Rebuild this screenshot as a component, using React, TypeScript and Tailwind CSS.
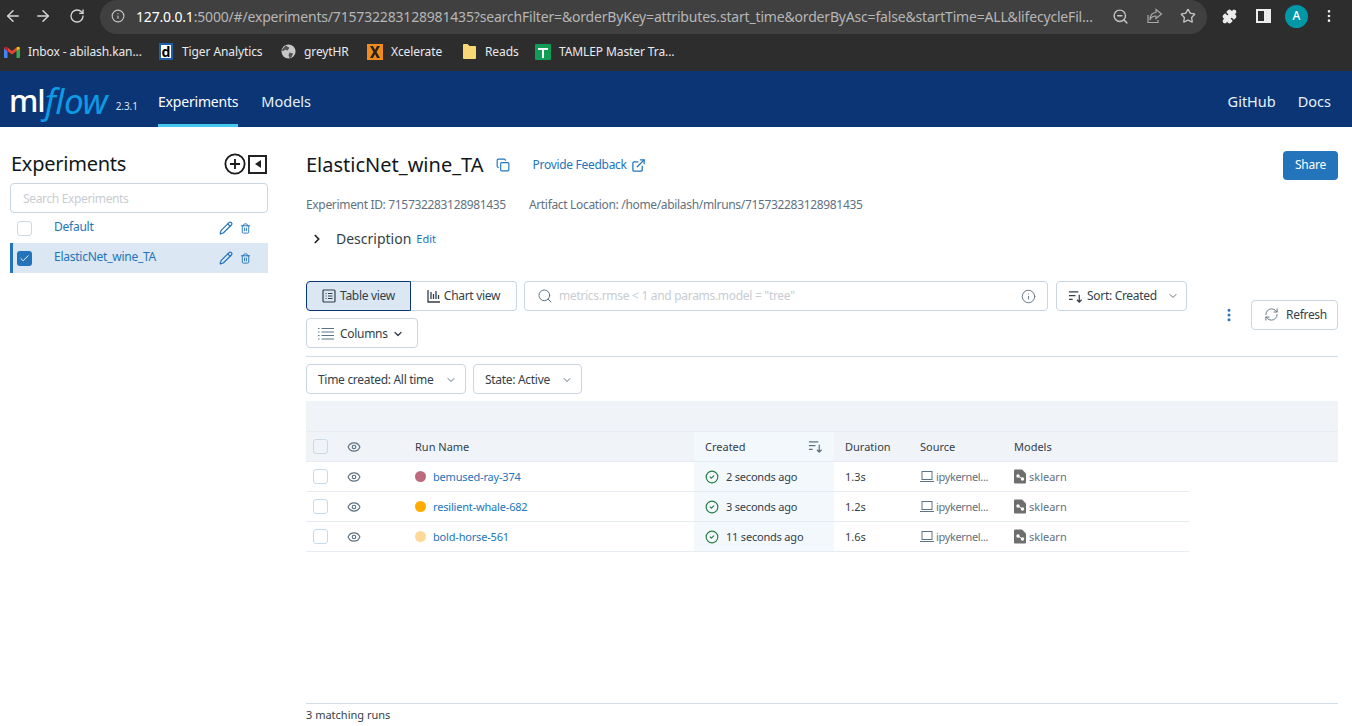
import React from "react";
import {
  ArrowLeft, ArrowRight, RotateCw, Info, ZoomOut, Star, Puzzle, EllipsisVertical,
  Pencil, Trash2, Check, Copy, ExternalLink, ChevronRight, ChevronDown, Search, RefreshCw,
  Eye, CircleCheck,
} from "lucide-react";

const SortIcon = ({ className = "" }: { className?: string }) => (
  <svg viewBox="0 0 16 16" className={className} fill="none" stroke="currentColor" strokeWidth="1.3">
    <path d="M1 3h10M1 7h7M1 11h4M12 6v8M9.500 11.500 12 14l2.500-2.500" />
  </svg>
);

const GmailIcon = () => (
  <svg viewBox="0 0 16 12" className="w-[16px] h-[12px]">
    <path d="M0 2v9a1 1 0 0 0 1 1h2.500V5z" fill="#4285f4" />
    <path d="M16 2v9a1 1 0 0 1-1 1h-2.500V5z" fill="#34a853" />
    <path d="M3.500 5 8 8.400 12.500 5V1.500L8 5 3.500 1.500z" fill="#ea4335" />
    <path d="M0 2.500C0 .8 2 0 3.500 1.500V5L0 2.500z" fill="#c5221f" />
    <path d="M16 2.500C16 .8 14 0 12.500 1.500V5L16 2.500z" fill="#fbbc04" />
  </svg>
);

const TigerIcon = () => (
  <div className="w-[14px] h-[17px] bg-white border-2 border-[#1e5fa8] flex items-center justify-center text-[14px] leading-none font-bold text-black">d</div>
);

const GlobeIcon = () => (
  <svg viewBox="0 0 16 16" className="w-[15px] h-[15px]">
    <circle cx="8" cy="8" r="7.500" fill="#c8c8c8" />
    <path d="M5 1.500 9 4 7 7 4 6 2 8 1 6zM9 9l4 1-2 4.500-2 .5-1-3z" fill="#555" />
  </svg>
);

const XcelerateIcon = () => (
  <svg viewBox="0 0 16 16" className="w-[16px] h-[16px]">
    <rect width="16" height="16" fill="#ef8a1d" />
    <path d="M3 2h3l2 4 2-4h3L9.500 8 13 14h-3L8 10l-2 4H3l3.500-6z" fill="#26221f" />
  </svg>
);

const FolderIcon = () => (
  <svg viewBox="0 0 14 16" className="w-[13px] h-[15px]">
    <path d="M0 1a1 1 0 0 1 1-1h4l2 2h6a1 1 0 0 1 1 1v12a1 1 0 0 1-1 1H1a1 1 0 0 1-1-1z" fill="#f8d775" />
  </svg>
);

const SheetIcon = () => (
  <svg viewBox="0 0 16 16" className="w-[16px] h-[16px]">
    <rect width="16" height="16" rx="1" fill="#0f9d58" />
    <path d="M3 4h10v2H9v8H7V6H3z" fill="#fff" />
  </svg>
);

const ShareOutIcon = () => (
  <svg viewBox="0 0 16 16" className="w-[17px] h-[16px] ml-[17px] text-[#a8a8a8] shrink-0" fill="none" stroke="currentColor" strokeWidth="1.200">
    <path d="M1.500 7v7.500h10V12" />
    <path d="M9.500 1.500 15 6l-5.500 4.500V8C7 8 4.500 9 3.500 12c0-5 2.500-7.500 6-7.500z" />
  </svg>
);

const TableViewIcon = () => (
  <svg viewBox="0 0 14 14" className="w-[14px] h-[14px]" fill="none" stroke="currentColor" strokeWidth="1.200">
    <rect x="1" y="1" width="12" height="12" rx="1" />
    <path d="M3.500 4.500h1M6 4.500h4.500M3.500 7h1M6 7h4.500M3.500 9.500h1M6 9.500h4.500" />
  </svg>
);

const ColumnsIcon = () => (
  <svg viewBox="0 0 16 12" className="w-[16px] h-[12px] text-[#5f7281]" fill="none" stroke="currentColor" strokeWidth="1">
    <path d="M0 .5h1.500M3.500 .5H16M0 4h1.500M3.500 4H16M0 7.500h1.500M3.500 7.500H16M0 11h1.500M3.500 11H16" />
  </svg>
);

const LaptopIcon = () => (
  <svg viewBox="0 0 14 13" className="w-[14px] h-[13px] shrink-0 text-[#5f7281]" fill="none" stroke="currentColor" strokeWidth="1">
    <rect x="2" y="1.500" width="10" height="8" />
    <path d="M0 11.500h14" />
  </svg>
);

const SklearnIcon = () => (
  <svg viewBox="0 0 12 14" className="w-[12px] h-[15px] shrink-0">
    <path d="M0 1a1 1 0 0 1 1-1h7l4 4v9a1 1 0 0 1-1 1H1a1 1 0 0 1-1-1z" fill="#6e6e6e" />
    <circle cx="4" cy="6.500" r="1.700" fill="#fff" />
    <circle cx="8.500" cy="9.500" r="1.700" fill="#fff" />
    <path d="M4 6.500 8.500 9.500" stroke="#fff" strokeWidth="1" />
  </svg>
);

const Bookmark = ({ icon, label, width }: { icon: React.ReactNode; label: string; width: string }) => (
  <div className={`flex items-center gap-[8px] ${width}`}>
    <span className="w-[16px] flex justify-center shrink-0">{icon}</span>
    <span className="text-[12px] tracking-[-0.1px] text-[#e8eaed] whitespace-nowrap">{label}</span>
  </div>
);

const Btn = ({ className = "", children }: { className?: string; children: React.ReactNode }) => (
  <div className={`h-[30px] flex items-center border border-[#c9d6e2] rounded-[4px] text-[12px] tracking-[-0.3px] text-[#333f4a] ${className}`}>
    {children}
  </div>
);

const runs = [
  { name: "bemused-ray-374", color: "#bd6a7d", time: "2 seconds ago", dur: "1.3s" },
  { name: "resilient-whale-682", color: "#ffab00", time: "3 seconds ago", dur: "1.2s" },
  { name: "bold-horse-561", color: "#ffd998", time: "11 seconds ago", dur: "1.6s" },
];

const Box = () => <div className="w-[15px] h-[15px] border border-[#c9d9e6] rounded-[3px] bg-white" />;

export default function App() {
  return (
    <div className="w-[1352px] h-[726px] overflow-hidden bg-white flex flex-col font-['Noto_Sans',sans-serif]">
      {/* browser */}
      <div className="h-[36px] bg-[#2d2d2d] flex items-start shrink-0">
        <div className="h-[32px] flex items-center pl-[4px] w-[100px] text-[#d5d5d5]">
          <ArrowLeft className="w-[18px] h-[18px]" />
          <ArrowRight className="w-[18px] h-[18px] ml-[12px]" />
          <RotateCw className="w-[16px] h-[16px] ml-[17px]" />
        </div>
        <div className="w-[1107px] h-[34px] bg-[#404040] rounded-full flex items-center pl-[11px] pr-[11px] pb-[2px]">
          <Info className="w-[14px] h-[14px] text-[#c4c4c4] shrink-0" />
          <div className="ml-[11px] text-[14px] tracking-[-0.18px] whitespace-nowrap flex-1 min-w-0 text-[#b6b6b6]">
            <span className="text-white">127.0.0.1</span>:5000/#/experiments/715732283128981435?searchFilter=&amp;orderByKey=attributes.start_time&amp;orderByAsc=false&amp;startTime=ALL&amp;lifecycleFil...
          </div>
          <ZoomOut className="w-[17px] h-[17px] text-[#c4c4c4] shrink-0" />
          <ShareOutIcon />
          <Star className="w-[16px] h-[16px] ml-[17px] text-[#c4c4c4] shrink-0" strokeWidth={2} />
        </div>
        <div className="flex items-center h-[32px] pl-[15px] text-[#ececec]">
          <Puzzle className="w-[15px] h-[15px] fill-current" />
          <div className="w-[15px] h-[14px] ml-[19px] border-2 border-[#ececec] flex justify-end"><div className="w-[5px] bg-[#ececec]" /></div>
          <div className="w-[23px] h-[23px] ml-[14px] rounded-full bg-[#0097a7] text-white text-[12px] font-medium flex items-center justify-center">A</div>
          <EllipsisVertical className="w-[16px] h-[16px] ml-[13px]" />
        </div>
      </div>
      <div className="h-[35px] bg-[#2d2d2d] flex items-center pl-[4px] pb-[4px] shrink-0">
        <Bookmark icon={<GmailIcon />} label="Inbox - abilash.kan..." width="w-[154px]" />
        <Bookmark icon={<TigerIcon />} label="Tiger Analytics" width="w-[122px]" />
        <Bookmark icon={<GlobeIcon />} label="greytHR" width="w-[87px]" />
        <Bookmark icon={<XcelerateIcon />} label="Xcelerate" width="w-[94px]" />
        <Bookmark icon={<FolderIcon />} label="Reads" width="w-[74px]" />
        <Bookmark icon={<SheetIcon />} label="TAMLEP Master Tra..." width="w-[160px]" />
      </div>
      {/* nav */}
      <div className="h-[56px] bg-[#0b3574] flex items-stretch shrink-0 text-[#e7f1fb] text-[14px] tracking-[-0.2px]">
        <div className="w-[158px] flex items-center pl-[9px] tracking-normal pt-[3px]">
          <span className="text-white text-[31px] leading-none font-medium -tracking-[1px]">ml</span>
          <span className="text-[#0d9ae6] text-[35px] leading-none italic -tracking-[0.5px] w-[66px] whitespace-nowrap">flow</span>
          <span className="text-[#dce8f2] text-[10px] ml-[5px] mt-[12px] tracking-[-0.1px]">2.3.1</span>
        </div>
        <div className="flex items-center border-b-[3px] border-[#43c9ed] pt-[8px] text-white">Experiments</div>
        <div className="flex items-center pl-[23px] pt-[8px] pb-[3px] text-[14.5px] tracking-normal">Models</div>
        <div className="flex items-center ml-auto pr-[21px] gap-[22px] pt-[8px] pb-[3px] text-[14.5px] tracking-normal">
          <span>GitHub</span>
          <span>Docs</span>
        </div>
      </div>
      {/* main */}
      <div className="flex-1 min-h-0 flex">
        <div className="w-[306px] shrink-0 pl-[10px] pr-[38px]">
          <div className="flex items-center h-[56px] pt-[18px]">
            <span className="text-[20px] tracking-[-0.25px] text-[#11171c] flex-1 pl-[1px]">Experiments</span>
            <svg viewBox="0 0 24 24" className="w-[22px] h-[22px] text-[#1a1a1a]" fill="none" stroke="currentColor" strokeWidth="2">
              <circle cx="12" cy="12" r="10.500" />
              <path d="M12 6.500v11M6.500 12h11" />
            </svg>
            <div className="w-[19px] h-[19px] ml-[2px] mr-[1px] border-2 border-[#222] flex items-center justify-center">
              <div className="w-0 h-0 border-y-[4px] border-y-transparent border-r-[6px] border-r-[#222]" />
            </div>
          </div>
          <div className="h-[30px] border border-[#c9d6e2] rounded-[4px] flex items-center pl-[12px] pt-[1px] text-[12px] tracking-[-0.35px] text-[#c8cdd2]">Search Experiments</div>
          <div className="h-[30px] flex items-center text-[12px] tracking-[-0.25px] text-[#2374bb] pl-[7px] pr-[17px]">
            <Box />
            <span className="ml-[22px] flex-1 pb-[2px]">Default</span>
            <Pencil className="w-[14px] h-[14px]" />
            <Trash2 className="w-[11px] h-[11px] ml-[7px]" />
          </div>
          <div className="h-[30px] flex items-center text-[12px] tracking-[-0.25px] text-[#2374bb] pl-[4px] pr-[17px] bg-[#dbe7f3] border-l-[3px] border-[#2374bb]">
            <div className="w-[15px] h-[15px] rounded-[3px] bg-[#2374bb] flex items-center justify-center">
              <Check className="w-[11px] h-[11px] text-white" />
            </div>
            <span className="ml-[22px] flex-1 pb-[2px]">ElasticNet_wine_TA</span>
            <Pencil className="w-[14px] h-[14px]" />
            <Trash2 className="w-[11px] h-[11px] ml-[7px]" />
          </div>
        </div>
        <div className="flex-1 min-w-0 mr-[14px] flex flex-col">
          <div className="flex items-center h-[54px] pt-[22px]">
            <span className="text-[20px] text-[#11171c]">ElasticNet_wine_TA</span>
            <Copy className="w-[14px] h-[14px] ml-[12px] text-[#2374bb]" />
            <span className="ml-[23px] text-[12px] tracking-[-0.3px] text-[#2374bb]">Provide Feedback</span>
            <ExternalLink className="w-[15px] h-[15px] ml-[4px] text-[#2374bb]" />
            <div className="ml-auto h-[29px] w-[55px] bg-[#2374bb] rounded-[4px] text-white text-[12px] tracking-[-0.2px] flex items-center justify-center">Share</div>
          </div>
          <div className="flex items-center mt-[15px] h-[18px] text-[12px] tracking-[-0.33px] text-[#5f7281]">
            <span>Experiment ID: 715732283128981435</span>
            <span className="ml-[23px]">Artifact Location: /home/abilash/mlruns/715732283128981435</span>
          </div>
          <div className="flex items-center mt-[16px] h-[18px] pl-[4px]">
            <ChevronRight className="w-[14px] h-[14px] text-[#222]" strokeWidth={3} />
            <span className="ml-[12px] text-[14px] text-[#333f4a] pb-[1px]">Description</span>
            <span className="ml-[5px] text-[11px] text-[#2374bb]">Edit</span>
          </div>
          <div className="mt-[33px] flex items-center pb-[8px] border-b border-[#d0dce7]">
            <div className="w-[881px] flex flex-wrap gap-y-[7px]">
              <Btn className="w-[105px] justify-center gap-[4px] !border-[#0b3574] rounded-r-none bg-[#dbe7f3]">
                <TableViewIcon />Table view
              </Btn>
              <Btn className="w-[106px] justify-center gap-[3px] border-l-0 rounded-l-none">
                <svg viewBox="0 0 14 14" className="w-[14px] h-[14px]" fill="none" stroke="currentColor" strokeWidth="1.300"><path d="M1 1v12h12M4 10V3M6.500 10V5M9 10V2M11.500 10V6" /></svg>
                Chart view
              </Btn>
              <Btn className="w-[524px] ml-[7px] pl-[12px] pr-[11px]">
                <Search className="w-[16px] h-[16px] text-[#5f7281]" strokeWidth={1.5} />
                <span className="ml-[6px] flex-1 text-[#c8cdd2]">metrics.rmse &lt; 1 and params.model = "tree"</span>
                <Info className="w-[15px] h-[15px] text-[#5f7281]" strokeWidth={1.5} />
              </Btn>
              <Btn className="w-[131px] ml-[8px] pl-[11px]">
                <SortIcon className="w-[15px] h-[15px]" />
                <span className="ml-[4px]">Sort: Created</span>
                <ChevronDown className="w-[12px] h-[12px] ml-auto mr-[7px] text-[#5f7281]" />
              </Btn>
              <Btn className="w-[112px] pl-[11px] pt-[1px]">
                <ColumnsIcon />
                <span className="ml-[6px]">Columns</span>
                <ChevronDown className="w-[12px] h-[12px] ml-[4px]" strokeWidth={2.5} />
              </Btn>
            </div>
            <EllipsisVertical className="w-[16px] h-[16px] ml-[34px] text-[#2374bb]" strokeWidth={2.5} />
            <Btn className="w-[87px] ml-[14px] pl-[12px]">
              <RefreshCw className="w-[15px] h-[15px] text-[#5f7281]" strokeWidth={1.5} />
              <span className="ml-[7px]">Refresh</span>
            </Btn>
          </div>
          <div className="mt-[7px] flex gap-[7px]">
            <Btn className="w-[160px] pl-[11px] pt-[1px]">
              Time created: All time
              <ChevronDown className="w-[12px] h-[12px] ml-auto mr-[8px] text-[#5f7281]" />
            </Btn>
            <Btn className="w-[109px] pl-[11px] pt-[1px]">
              State: Active
              <ChevronDown className="w-[12px] h-[12px] ml-auto mr-[8px] text-[#5f7281]" />
            </Btn>
          </div>
          <div className="mt-[7px] h-[30px] bg-[#f0f4f8]" />
          <div className="h-[31px] bg-[#f0f4f8] border-t border-b border-[#e6ecf1] flex items-center text-[11px] text-[#333f4a]">
            <div className="w-[35px] pl-[7px]"><div className="w-[15px] h-[15px] border border-[#c9d9e6] rounded-[3px] bg-[#f0f4f8]" /></div>
            <div className="w-[64px] pl-[6px]"><Eye className="w-[14px] h-[14px] text-[#5f7281]" /></div>
            <div className="w-[289px] pl-[10px] pt-[2px]">Run Name</div>
            <div className="w-[140px] h-full pl-[11px] pr-[11px] pt-[2px] bg-[#f3f8fd] flex items-center justify-between">Created<SortIcon className="w-[15px] h-[15px] text-[#5f7281] -mt-[2px]" /></div>
            <div className="w-[75px] pl-[11px] pt-[2px]">Duration</div>
            <div className="w-[94px] pl-[11px] pt-[2px]">Source</div>
            <div className="pl-[11px] pt-[2px]">Models</div>
          </div>
          {runs.map((r) => (
            <div key={r.name} className="w-[883px] h-[30px] border-b border-[#e6ecf1] flex items-center text-[11px] text-[#333f4a]">
              <div className="w-[35px] pl-[7px]"><Box /></div>
              <div className="w-[64px] pl-[6px]"><Eye className="w-[14px] h-[14px] text-[#5f7281]" /></div>
              <div className="w-[289px] pl-[10px] flex items-center">
                <span className="w-[11px] h-[11px] rounded-full" style={{ backgroundColor: r.color }} />
                <span className="ml-[7px] pt-[2px] tracking-[-0.18px] text-[#2374bb]">{r.name}</span>
              </div>
              <div className="w-[140px] h-full pl-[11px] bg-[#f3f8fd] flex items-center">
                <CircleCheck className="w-[14px] h-[14px] text-[#277c43]" />
                <span className="ml-[7px] pt-[2px] tracking-[-0.2px]">{r.time}</span>
              </div>
              <div className="w-[75px] pl-[11px] pt-[2px]">{r.dur}</div>
              <div className="w-[94px] pl-[11px] flex items-center text-[#5f7281]">
                <LaptopIcon />
                <span className="ml-[2px] pt-[2px] tracking-[-0.35px] whitespace-nowrap">ipykernel...</span>
              </div>
              <div className="pl-[11px] flex items-center">
                <SklearnIcon />
                <span className="ml-[3px] pt-[2px] text-[#5f7281]">sklearn</span>
              </div>
            </div>
          ))}
          <div className="mt-auto h-[23px] border-t border-[#d0dce7] flex items-center text-[11px] text-[#333f4a]">3 matching runs</div>
        </div>
      </div>
    </div>
  );
}
